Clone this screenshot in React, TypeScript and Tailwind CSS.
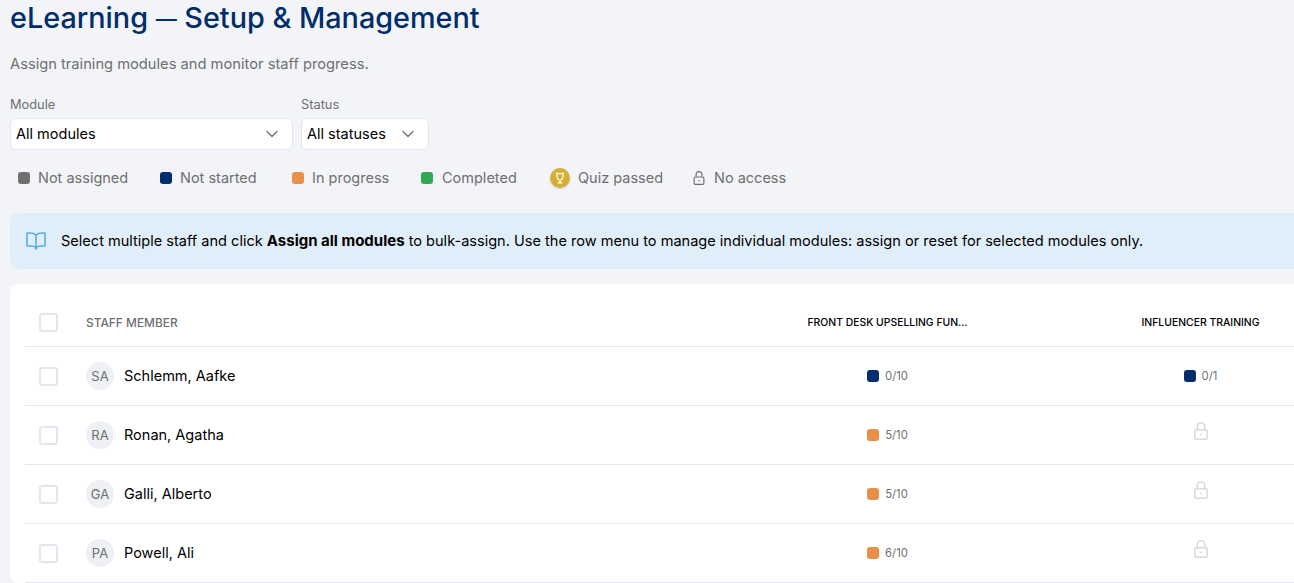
import { ChevronDown } from 'lucide-react'

type Cell = { color?: string; label?: string }

const NAVY = 'bg-[#002d6b]'
const ORANGE = 'bg-[#ea8f47]'

const rows: { initials: string; name: string; first: Cell; second: Cell }[] = [
  { initials: 'SA', name: 'Schlemm, Aafke', first: { color: NAVY, label: '0/10' }, second: { color: NAVY, label: '0/1' } },
  { initials: 'RA', name: 'Ronan, Agatha', first: { color: ORANGE, label: '5/10' }, second: {} },
  { initials: 'GA', name: 'Galli, Alberto', first: { color: ORANGE, label: '5/10' }, second: {} },
  { initials: 'PA', name: 'Powell, Ali', first: { color: ORANGE, label: '6/10' }, second: {} },
]

function Swatch({ color }: { color: string }) {
  return <span className={`size-3 rounded-[3px] ${color}`} />
}

function LegendText({ children, width }: { children: string; width: string }) {
  return <span className={`text-[14.5px] leading-5 whitespace-nowrap text-[#6f6f6f] ${width}`}>{children}</span>
}

function Checkbox() {
  return <span className="block size-[19px] rounded-[3px] border-2 border-[#e1e6f0] bg-white" />
}

function LockIcon({ className }: { className: string }) {
  return (
    <svg viewBox="0 0 14 18" fill="none" stroke="currentColor" strokeWidth="1.5" className={className}>
      <rect x="0.75" y="7.75" width="12.5" height="9.5" rx="1.5" />
      <path d="M3.25 7.5V4.5a3.75 3.75 0 0 1 7.5 0v3" />
      <circle cx="7" cy="12.5" r="0.9" fill="currentColor" stroke="none" />
    </svg>
  )
}

function CupIcon() {
  return (
    <svg viewBox="0 0 12 12" fill="none" stroke="#fbf3d4" strokeWidth="1.4" className="size-[12px]">
      <path d="M2.5 1.5h7L8.6 6.2a2.7 2.7 0 0 1-5.2 0z" />
      <path d="M6 8.5v1.5M3.8 10.8h4.4" />
    </svg>
  )
}

function BookIcon() {
  return (
    <svg viewBox="0 0 20 18" fill="none" stroke="#5aaee6" strokeWidth="1.6" strokeLinejoin="round" className="h-[18px] w-[20px]">
      <path d="M10 3.2C8.6 1.8 6.6 1 4.4 1H1v13h4.4c2 0 3.7.6 4.6 1.8.9-1.2 2.6-1.8 4.6-1.8H19V1h-3.4C13.4 1 11.4 1.8 10 3.2z" />
      <path d="M10 3.2v12.6" />
      <path d="M8.8 16.6h2.4" />
    </svg>
  )
}

function ProgressCell({ cell }: { cell: Cell }) {
  if (!cell.label) {
    return (
      <div className="flex w-[313px] shrink-0 justify-center pb-[8px]">
        <LockIcon className="h-[18px] w-[14px] text-[#d9d9d9]" />
      </div>
    )
  }
  return (
    <div className="flex w-[313px] shrink-0 items-center justify-center gap-[6px] pb-[1px]">
      <Swatch color={cell.color!} />
      <span className="text-[11.3px] leading-4 text-[#6f6f6f]">{cell.label}</span>
    </div>
  )
}

export default function App() {
  return (
    <div className="h-[583px] w-[1294px] overflow-hidden bg-[#f2f4f8] pl-[10px] font-['Inter',sans-serif]">
      <h1 className="h-[36px] text-[28.8px] font-medium leading-[36px] whitespace-nowrap text-[#002d6b]">
        eLearning <span className="align-[2px] text-[21px]">—</span> Setup &amp; Management
      </h1>
      <p className="mt-[18px] text-[14.7px] leading-5 text-[#6f6f6f]">
        Assign training modules and monitor staff progress.
      </p>

      <div className="mt-[23px] flex gap-2">
        <div>
          <div className="text-[12.8px] leading-[16px] text-[#6f6f6f]">Module</div>
          <div className="mt-[5px] flex h-[32px] w-[283px] items-center justify-between rounded-md border border-[#e1e6f0] bg-white pl-[5px] pr-[10px]">
            <span className="text-[14.5px] text-black">All modules</span>
            <ChevronDown className="size-[20px] text-[#6f6f6f]" strokeWidth={1.5} />
          </div>
        </div>
        <div>
          <div className="text-[12.8px] leading-[16px] text-[#6f6f6f]">Status</div>
          <div className="mt-[5px] flex h-[32px] w-[128px] items-center justify-between rounded-md border border-[#e1e6f0] bg-white pl-[5px] pr-[10px]">
            <span className="text-[14.5px] text-black">All statuses</span>
            <ChevronDown className="size-[20px] text-[#6f6f6f]" strokeWidth={1.5} />
          </div>
        </div>
      </div>

      <div className="mt-[18px] flex h-[20px] items-center gap-[32px] pl-[8px]">
        <div className="flex items-center gap-[8px]">
          <Swatch color="bg-[#6f6f6f]" />
          <LegendText width="w-[90px]">Not assigned</LegendText>
        </div>
        <div className="flex items-center gap-[8px]">
          <Swatch color={NAVY} />
          <LegendText width="w-[80px]">Not started</LegendText>
        </div>
        <div className="flex items-center gap-[8px]">
          <Swatch color={ORANGE} />
          <LegendText width="w-[77px]">In progress</LegendText>
        </div>
        <div className="flex items-center gap-[9px]">
          <Swatch color="bg-[#32a852]" />
          <LegendText width="w-[76px]">Completed</LegendText>
        </div>
        <div className="flex items-center gap-[8px]">
          <span className="flex size-[20px] items-center justify-center rounded-full bg-[#d4af37] shadow-sm">
            <CupIcon />
          </span>
          <LegendText width="w-[83px]">Quiz passed</LegendText>
        </div>
        <div className="flex items-center gap-[9px]">
          <LockIcon className="h-[14px] w-[12px] text-[#6f6f6f]" />
          <LegendText width="w-[72px]">No access</LegendText>
        </div>
      </div>

      <div className="mt-[25px] flex h-[56px] w-[1320px] items-center rounded-l-lg bg-[#e0eef9] pl-[16px]">
        <BookIcon />
        <p className="ml-[15px] pt-[1px] text-[14.55px] text-black whitespace-nowrap">
          Select multiple staff and click <strong className="text-[15px] font-bold">Assign all modules</strong> to bulk-assign.
          Use the row menu to manage individual modules: assign or reset for selected modules only.
        </p>
      </div>

      <div className="mt-[15px] w-[1400px] rounded-lg bg-white px-[15px] pt-[15px]">
        <div className="flex h-[48px] items-center border-b border-[#e1e6f0]">
          <div className="w-[61px] shrink-0 pl-[14px]">
            <Checkbox />
          </div>
          <div className="w-[645px] shrink-0 text-[11.9px] font-medium text-[#6f6f6f]">STAFF MEMBER</div>
          <div className="w-[313px] shrink-0 text-center text-[10.4px] font-medium text-black">
            FRONT DESK UPSELLING FUN...
          </div>
          <div className="w-[313px] shrink-0 text-center text-[10.4px] font-medium text-black">INFLUENCER TRAINING</div>
        </div>
        {rows.map((row) => (
          <div key={row.name} className="flex h-[59px] items-center border-b border-[#e1e6f0]">
            <div className="w-[61px] shrink-0 pl-[14px]">
              <Checkbox />
            </div>
            <div className="flex w-[645px] shrink-0 items-center gap-[10px]">
              <span className="flex size-[28px] items-center justify-center rounded-full bg-[#eef0f5] pt-[1px] text-[13px] text-[#6f6f6f]">
                {row.initials}
              </span>
              <span className="text-[14.5px] text-black">{row.name}</span>
            </div>
            <ProgressCell cell={row.first} />
            <ProgressCell cell={row.second} />
          </div>
        ))}
      </div>
    </div>
  )
}
